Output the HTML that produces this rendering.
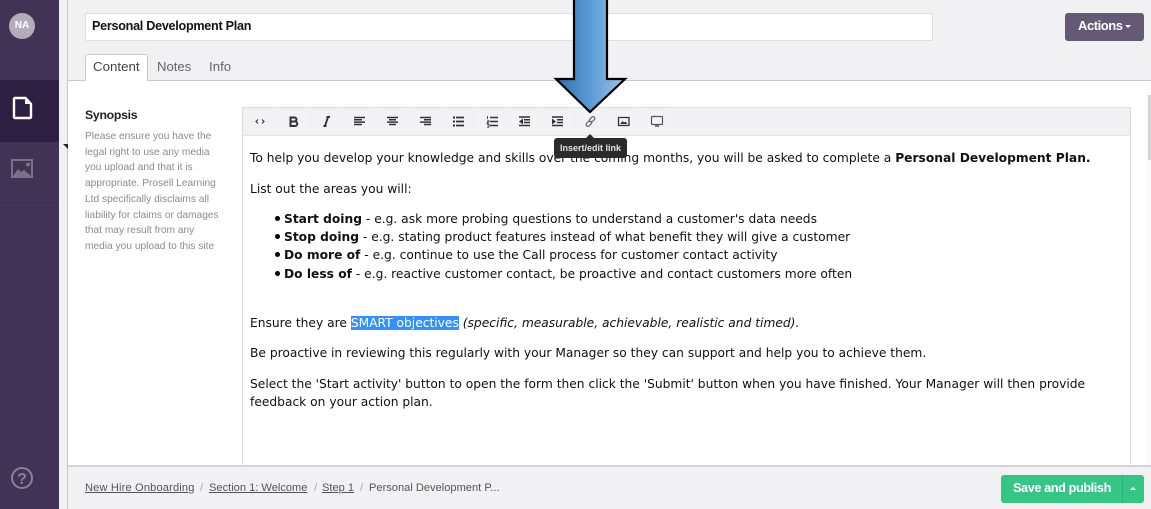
<!DOCTYPE html>
<html><head><meta charset="utf-8">
<style>
*{box-sizing:border-box}
html,body{margin:0;padding:0;width:1151px;height:509px;overflow:hidden;background:#fff;font-family:"Liberation Sans",sans-serif}
.a{position:absolute}
.t{position:absolute;white-space:nowrap}
.ed{position:absolute;left:250px;font-family:"DejaVu Sans",sans-serif;font-size:12.25px;color:#111;white-space:nowrap;line-height:18px}
.li{position:absolute;left:275px;width:5px;height:5px;border-radius:50%;background:#000}
.tb{position:absolute;top:111px;width:32px;height:21px;background:#f3f3f5;border-radius:3px;box-shadow:0 0 0 1px #f0f0f2}
.bc{position:absolute;top:482px;font-size:11.1px;color:#555;white-space:nowrap;text-decoration:underline}
.sl{position:absolute;top:482px;font-size:11.1px;color:#aaa}
svg{position:absolute}
</style></head><body>
<div class="a" style="left:0;top:0;width:59px;height:509px;background:#413355"></div>
<div class="a" style="left:0;top:80px;width:59px;height:62px;background:#2c1f42"></div>
<div class="a" style="left:0;top:202px;width:59px;height:1px;background:#3a2d4e"></div>
<div class="a" style="left:9px;top:13px;width:26px;height:26px;border-radius:50%;background:#b3adbb;color:#fff;font-size:10px;font-weight:bold;text-align:center;line-height:26px">NA</div>
<svg style="left:12px;top:96px" width="22" height="24" viewBox="0 0 22 24"><path d="M3 2h10.500l5.500 6v13a1 1 0 0 1-1 1h-15a1 1 0 0 1-1-1v-18a1 1 0 0 1 1-1z" fill="none" stroke="#fff" stroke-width="2.400"/><path d="M13 2v6h6z" fill="#fff"/></svg>
<svg style="left:10px;top:158px" width="24" height="21" viewBox="0 0 24 21"><rect x="2" y="2" width="20" height="17" fill="none" stroke="#7b7189" stroke-width="2"/><path d="M3 18l5-7 3 3 3-2 7 6z" fill="#7b7189"/><circle cx="18" cy="6.500" r="2" fill="#7b7189"/></svg>
<svg style="left:10px;top:466px" width="24" height="24" viewBox="0 0 24 24"><circle cx="12" cy="12" r="10" fill="none" stroke="#8a8198" stroke-width="2"/><text x="12" y="18" text-anchor="middle" font-family="Liberation Sans" font-weight="bold" font-size="16" fill="#8a8198">?</text></svg>

<div class="a" style="left:59px;top:0;width:1092px;height:81px;background:#f1f1f4"></div>
<div class="a" style="left:59px;top:80px;width:1092px;height:1px;background:#c9c8d0"></div>
<div class="a" style="left:59px;top:0;width:9px;height:509px;background:#f1f1f4"></div>
<div class="a" style="left:67px;top:0;width:1px;height:509px;background:#c9c8d0"></div>
<div class="a" style="left:63px;top:144px;width:0;height:0;border-top:5px solid #222;border-left:5px solid transparent"></div>
<div class="a" style="left:1147px;top:81px;width:4px;height:384px;background:#fafafa"></div>
<div class="a" style="left:1148px;top:95px;width:3px;height:65px;background:#d4d4d8"></div>

<div class="a" style="left:85px;top:13px;width:848px;height:28px;background:#fff;border:1px solid #dfdfe3;border-radius:2px"></div>
<div class="t" style="left:92px;top:18px;font-size:12.600px;font-weight:bold;color:#111;letter-spacing:-.27px;line-height:16px">Personal Development Plan</div>
<div class="a" style="left:1065px;top:13px;width:79px;height:28px;background:#655a75;border-radius:3px"></div>
<div class="t" style="left:1078px;top:18px;font-size:13px;font-weight:bold;color:#fff;letter-spacing:-.45px;line-height:15px">Actions</div>
<div class="a" style="left:1125px;top:25px;width:0;height:0;border-top:3px solid #fff;border-left:3.500px solid transparent;border-right:3.500px solid transparent"></div>

<div class="a" style="left:85px;top:54px;width:63px;height:27px;background:#fff;border:1px solid #c9c8d0;border-bottom:0;border-radius:3px 3px 0 0"></div>
<div class="t" style="left:93px;top:59px;font-size:13.300px;color:#444;line-height:16px">Content</div>
<div class="t" style="left:157px;top:59px;font-size:13.100px;color:#666;line-height:16px">Notes</div>
<div class="t" style="left:209px;top:59px;font-size:13.300px;color:#666;line-height:16px">Info</div>

<div class="t" style="left:85px;top:108px;font-size:12.300px;font-weight:bold;color:#222;letter-spacing:-.3px;line-height:15px">Synopsis</div>
<div class="t" style="left:85px;top:129px;font-size:10.200px;line-height:15.700px;color:#8b8b90">Please ensure you have the<br>legal right to use any media<br>you upload and that it is<br>appropriate. Prosell Learning<br>Ltd specifically disclaims all<br>liability for claims or damages<br>that may result from any<br>media you upload to this site</div>

<div class="a" style="left:242px;top:107px;width:889px;height:360px;border:1px solid #dcdce0"></div>
<div class="a" style="left:243px;top:108px;width:887px;height:28px;background:#f1f1f4;border-bottom:1px solid #e4e4e8"></div>
<div class="tb" style="left:244px"></div><div class="tb" style="left:277px"></div><div class="tb" style="left:310px"></div><div class="tb" style="left:343px"></div><div class="tb" style="left:376px"></div><div class="tb" style="left:409px"></div><div class="tb" style="left:442px"></div><div class="tb" style="left:475px"></div><div class="tb" style="left:508px"></div><div class="tb" style="left:541px"></div><div class="tb" style="left:574px"></div><div class="tb" style="left:607px"></div><div class="tb" style="left:640px"></div>

<svg style="left:244px;top:108px" width="440" height="28" viewBox="244 108 440 28" fill="none" stroke="#333" stroke-width="1.300">
<path d="M258 119.500l-2 2 2 2M262 119.500l2 2-2 2" stroke-width="1.100"/>
<path d="M290.500 117.500h4a2 2 0 0 1 0 4h-4zM290.500 121.500h4.500a2.200 2.200 0 0 1 0 4.500h-4.500z" stroke-width="2"/>
<path d="M325 126l3-9M323.500 126h3M326.500 117h3.500" stroke-width="1.900"/>
<path d="M354 117.500h11M354 119.800h8M354 122.100h11M354 124.500h8" stroke-width="1.500"/>
<path d="M387 117.500h11M389 119.800h7M387 122.100h11M389 124.500h7" stroke-width="1.500"/>
<path d="M420 117.500h11M424 119.800h7M420 122.100h11M424 124.500h7" stroke-width="1.500"/>
<path d="M456 117.500h8M456 121.500h8M456 125.500h8" stroke-width="1.700"/><path d="M453 117.500h2M453 121.500h2M453 125.500h2" stroke-width="2"/>
<path d="M490 117.500h8M490 121.500h8M490 125.500h8" stroke-width="1.500"/><path d="M487.500 116v3M487 121h2l-2 2h2M487 124.500h2v2.500h-2" stroke-width=".9"/>
<path d="M519 117h11M524 119.800h6M524 122.500h6M519 125.500h11" stroke-width="1.500"/><path d="M523 118.500v6l-4-3z" fill="#333" stroke="none"/>
<path d="M552 117h11M557 119.800h6M557 122.500h6M552 125.500h11" stroke-width="1.500"/><path d="M552 118.500v6l4-3z" fill="#333" stroke="none"/>
<path d="M589 121l-2.500 2.500a1.800 1.800 0 0 0 2.500 2.500l2.500-2.500a1.800 1.800 0 0 0-1-2.500M592 122l2.500-2.500a1.800 1.800 0 0 0-2.500-2.500l-2.500 2.500a1.800 1.800 0 0 0 1 2.500" stroke="#666" stroke-width="1.200"/>
<rect x="618.500" y="117.500" width="10.500" height="8" stroke-width="1.300"/><path d="M620 124l2.500-3 1.500 1.500 1.500-1 2 2.500z" fill="#333" stroke="none"/>
<rect x="651.500" y="116.500" width="11" height="8" rx="1" stroke="#555" stroke-width="1.200"/><path d="M655 126h4" stroke="#555" stroke-width="1.500"/>
</svg>

<div class="ed" style="top:149px">To help you develop your knowledge and skills over the coming months, you will be asked to complete a <b>Personal Development Plan.</b></div>
<div class="ed" style="top:180px">List out the areas you will:</div>
<div class="li" style="top:216px"></div><div class="li" style="top:234px"></div><div class="li" style="top:252px"></div><div class="li" style="top:271px"></div>
<div class="ed" style="left:284px;top:210px"><b>Start doing</b> - e.g. ask more probing questions to understand a customer's data needs</div>
<div class="ed" style="left:284px;top:228px"><b>Stop doing</b> - e.g. stating product features instead of what benefit they will give a customer</div>
<div class="ed" style="left:284px;top:246px"><b>Do more of</b> - e.g. continue to use the Call process for customer contact activity</div>
<div class="ed" style="left:284px;top:265px"><b>Do less of</b> - e.g. reactive customer contact, be proactive and contact customers more often</div>
<div class="ed" style="top:314px">Ensure they are <span style="background:#3390ff;color:#fff">SMART objectives</span> <i>(specific, measurable, achievable, realistic and timed).</i></div>
<div class="ed" style="top:344px">Be proactive in reviewing this regularly with your Manager so they can support and help you to achieve them.</div>
<div class="ed" style="top:375px">Select the 'Start activity' button to open the form then click the 'Submit' button when you have finished. Your Manager will then provide</div>
<div class="ed" style="top:393px">feedback on your action plan.</div>

<div class="a" style="left:554px;top:138px;width:73px;height:20px;background:#2b2b2b;border-radius:3px"></div>
<div class="a" style="left:586px;top:134px;width:0;height:0;border-bottom:4px solid #2b2b2b;border-left:4px solid transparent;border-right:4px solid transparent"></div>
<div class="t" style="left:554px;width:73px;text-align:center;top:142px;font-size:9px;font-weight:bold;color:#e4e4e4;line-height:12px">Insert/edit link</div>

<svg style="left:550px;top:0" width="80" height="115" viewBox="550 0 80 115"><defs><linearGradient id="g" x1="0" x2="1" y1="0" y2="0"><stop offset="0" stop-color="#2f6fae"/><stop offset=".5" stop-color="#5b9bd5"/><stop offset="1" stop-color="#9dc3e6"/></linearGradient></defs><path d="M574 -2V79H556L590 112 625 79H607V-2z" fill="url(#g)" stroke="#000" stroke-width="2.200"/></svg>

<div class="a" style="left:68px;top:465px;width:1083px;height:44px;background:#f1f1f4;border-top:2px solid #d4d4da"></div>
<div class="bc" style="left:85px;letter-spacing:.15px">New Hire Onboarding</div>
<div class="sl" style="left:200px">/</div>
<div class="bc" style="left:209px">Section 1: Welcome</div>
<div class="sl" style="left:314px">/</div>
<div class="bc" style="left:322px">Step 1</div>
<div class="sl" style="left:360px">/</div>
<div class="bc" style="left:369px;text-decoration:none">Personal Development P...</div>
<div class="a" style="left:1001px;top:475px;width:143px;height:28px;background:#35c584;border-radius:3px"></div>
<div class="a" style="left:1122px;top:475px;width:1px;height:28px;background:#2eb177"></div>
<div class="t" style="left:1013px;top:481px;font-size:12.700px;font-weight:bold;color:#fff;letter-spacing:-.4px;line-height:15px">Save and publish</div>
<div class="a" style="left:1130px;top:487px;width:0;height:0;border-bottom:3.500px solid #fff;border-left:3.500px solid transparent;border-right:3.500px solid transparent"></div>
</body></html>
